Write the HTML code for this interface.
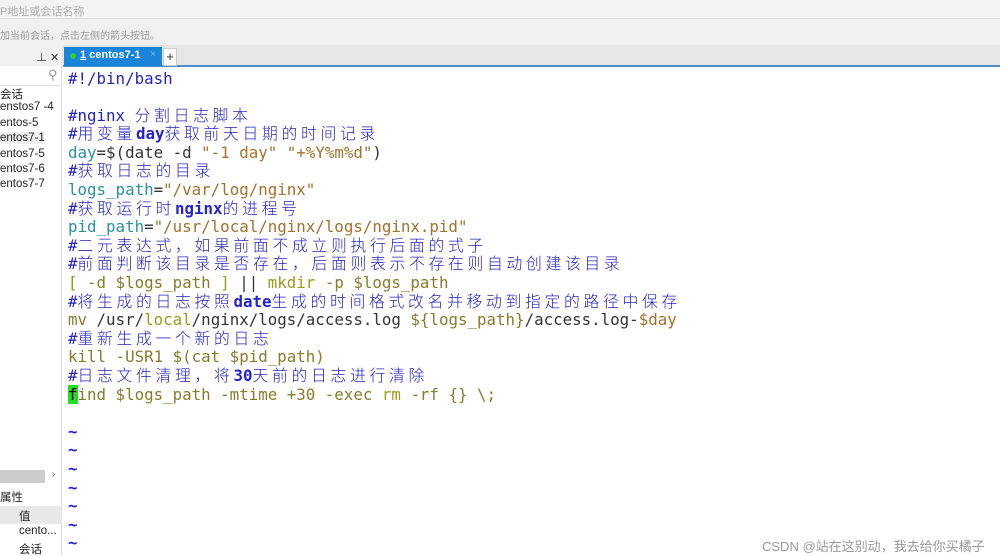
<!DOCTYPE html>
<html><head><meta charset="utf-8"><style>
*{margin:0;padding:0;box-sizing:border-box}
html,body{width:1000px;height:556px;overflow:hidden}
body{background:#fff;font-family:"Liberation Sans","Noto Sans CJK SC",sans-serif;position:relative}
.a{position:absolute}
.code{position:absolute;left:68px;top:69.5px;font-family:"DejaVu Sans Mono","Noto Sans CJK SC",monospace;font-size:15.8px;color:#333}
.code div{height:18.6px;line-height:18.6px;overflow:visible;white-space:pre}
.code i{font-style:normal;letter-spacing:3.7px;font-family:"Noto Sans CJK SC",sans-serif;font-weight:300;line-height:0}
.c{color:#2323b8}.v{color:#2b8fa3}.s{color:#a3702c}.o{color:#9a9a1c}.t{color:#2323d0;font-weight:bold}.k{color:#8a7a2a}
.l{font-size:11.5px;color:#222;position:absolute;left:0;white-space:nowrap}
</style></head><body>
<div class="a" style="left:0;top:0;width:1000px;height:19px;background:#f3f3f3;border-bottom:1px solid #e0e0e0"></div>
<div class="a" style="left:0;top:3px;font-size:11px;color:#aaa">P地址或会话名称</div>
<div class="a" style="left:0;top:19px;width:1000px;height:26px;background:#f0f0f0"></div>
<div class="a" style="left:0;top:27px;font-size:10px;color:#999">加当前会话，点击左侧的箭头按钮。</div>
<div class="a" style="left:0;top:45px;width:1000px;height:21px;background:#e6e6e6"></div>
<div class="a" style="left:63px;top:65px;width:937px;height:2px;background:#4a8ccc"></div>
<div class="a" style="left:64px;top:47px;width:98px;height:19px;background:#1a84d8"></div>
<div class="a" style="left:70px;top:53px;width:6px;height:6px;border-radius:50%;background:#2ecc40"></div>
<div class="a" style="left:80px;top:49px;font-size:11px;color:#fff;font-weight:bold"><u>1</u> centos7-1</div>
<div class="a" style="left:150px;top:49px;font-size:10px;color:#7ab8ea">×</div>
<div class="a" style="left:163px;top:48px;width:14px;height:18px;background:#fafafa;border:1px solid #ccc;font-size:13px;text-align:center;line-height:15px;color:#333">+</div>
<div class="a" style="left:0;top:45px;width:62px;height:511px;background:#fff;border-right:1px solid #ddd"></div>
<div class="a" style="left:0;top:45px;width:62px;height:21px;background:#f0f0f0"></div>
<div class="a" style="left:36px;top:49px;font-size:11px;color:#333">⊥ ✕</div>
<div class="a" style="left:0;top:66px;width:62px;height:20px;border-bottom:1px solid #e0e0e0"></div>
<div class="a" style="left:48px;top:67px;font-size:13px;color:#999">⚲</div>
<div class="l" style="top:86px">会话</div>
<div class="l" style="top:101px">enstos7 -4</div>
<div class="l" style="top:117px">entos-5</div>
<div class="l" style="top:132px;background:#eee;width:44px">entos7-1</div>
<div class="l" style="top:148px">entos7-5</div>
<div class="l" style="top:163px">entos7-6</div>
<div class="l" style="top:178px">entos7-7</div>
<div class="a" style="left:0;top:470px;width:45px;height:13px;background:#ccc"></div>
<div class="a" style="left:52px;top:469px;font-size:10px;color:#666">›</div>
<div class="l" style="top:489px">属性</div>
<div class="a" style="left:0;top:506px;width:62px;height:18px;background:#e8e8e8"></div>
<div class="l" style="top:508px;left:19px">值</div>
<div class="l" style="top:525px;left:19px">cento...</div>
<div class="l" style="top:541px;left:19px">会话</div>
<div class="code"><div><span class="c">#!/bin/bash</span></div><div></div><div><span class="c">#nginx <i>分割日志脚本</i></span></div><div><span class="c">#<i>用变量</i></span><span class="t">day</span><span class="c"><i>获取前天日期的时间记录</i></span></div><div><span class="v">day</span>=$(date -d <span class="s">"-1 day"</span> <span class="s">"+%Y%m%d"</span>)</div><div><span class="c">#<i>获取日志的目录</i></span></div><div><span class="v">logs_path</span>=<span class="s">"/var/log/nginx"</span></div><div><span class="c">#<i>获取运行时</i></span><span class="t">nginx</span><span class="c"><i>的进程号</i></span></div><div><span class="v">pid_path</span>=<span class="s">"/usr/local/nginx/logs/nginx.pid"</span></div><div><span class="c">#<i>二元表达式，如果前面不成立则执行后面的式子</i></span></div><div><span class="c">#<i>前面判断该目录是否存在，后面则表示不存在则自动创建该目录</i></span></div><div><span class="o">[</span> <span class="k">-d $logs_path</span> <span class="o">]</span> || <span class="o">mkdir</span> <span class="k">-p $logs_path</span></div><div><span class="c">#<i>将生成的日志按照</i></span><span class="t">date</span><span class="c"><i>生成的时间格式改名并移动到指定的路径中保存</i></span></div><div><span class="k">mv</span> /usr/<span class="o">local</span>/nginx/logs/access.log <span class="k">${logs_path}</span>/access.log-<span class="s">$day</span></div><div><span class="c">#<i>重新生成一个新的日志</i></span></div><div><span class="k">kill -USR1 $(cat $pid_path)</span></div><div><span class="c">#<i>日志文件清理，将</i></span><span class="t">30</span><span class="c"><i>天前的日志进行清除</i></span></div><div><span class="k"><span style="background:#22dd22;color:#000">f</span>ind $logs_path -mtime +30 -exec </span><span class="o">rm</span><span class="k"> -rf {} \;</span></div><div></div><div><span class="t">~</span></div><div><span class="t">~</span></div><div><span class="t">~</span></div><div><span class="t">~</span></div><div><span class="t">~</span></div><div><span class="t">~</span></div><div><span class="t">~</span></div></div>
<div class="a" style="left:762px;top:536px;font-size:13px;color:#999">CSDN @站在这别动，我去给你买橘子</div>
</body></html>
